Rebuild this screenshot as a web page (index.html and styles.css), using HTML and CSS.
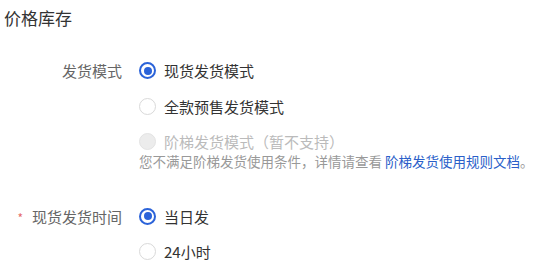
FILE: index.html
```html
<!DOCTYPE html>
<html lang="zh-CN">
<head>
    <meta charset="UTF-8">
    <title>价格库存</title>
    <link rel="stylesheet" href="styles.css">
</head>
<body>
    <div class="panel">
        <h3 class="title">价格库存</h3>

        <!-- 发货模式 -->
        <div class="form-item">
            <div class="label">发货模式</div>
            <div class="control">
                <label class="radio checked"><span class="dot"></span>现货发货模式</label>
                <label class="radio"><span class="dot"></span>全款预售发货模式</label>
                <label class="radio disabled"><span class="dot"></span>阶梯发货模式（暂不支持）</label>
                <p class="help">您不满足阶梯发货使用条件，详情请查看 <a href="#">阶梯发货使用规则文档</a>。</p>
            </div>
        </div>

        <!-- 现货发货时间 -->
        <div class="form-item">
            <div class="label"><span class="required">*</span>现货发货时间</div>
            <div class="control">
                <label class="radio checked"><span class="dot"></span>当日发</label>
                <label class="radio"><span class="dot"></span>24小时</label>
            </div>
        </div>
    </div>
</body>
</html>
```

FILE: styles.css
```css
body {
    margin: 0;
    background: #fff;
    font-family: "Noto Sans CJK SC", "Noto Sans", sans-serif;
    color: #333;
}

.panel {
    padding: 6px 0 0 4px;
}

.title {
    margin: 0;
    font-size: 17px;
    font-weight: normal;
    line-height: 24px;
    color: #333;
}

.form-item {
    display: flex;
    margin-top: 23px;
}

.form-item + .form-item {
    margin-top: 29px;
}

.label {
    width: 118px;
    text-align: right;
    font-size: 15px;
    line-height: 20px;
    padding-top: 8px;
    color: #666;
}

.required {
    color: #e56b6b;
    font-size: 12px;
    margin-right: 9px;
}

.control {
    padding-left: 17px;
    display: flex;
    flex-direction: column;
}

.radio {
    display: flex;
    align-items: center;
    height: 35.5px;
    font-size: 15px;
    color: #333;
}

.dot {
    width: 17px;
    height: 17px;
    border: 1px solid #d9d9d9;
    border-radius: 50%;
    margin-right: 8px;
    box-sizing: border-box;
    position: relative;
    background: #fff;
}

.checked .dot {
    border: 2px solid #2b63d9;
}

.checked .dot::after {
    content: "";
    position: absolute;
    left: 2.5px;
    top: 2.5px;
    width: 8px;
    height: 8px;
    border-radius: 50%;
    background: #2b63d9;
}

.disabled {
    color: #bbb;
}

.disabled .dot {
    background: #ececec;
    border-color: #e3e3e3;
}

.help {
    margin: -8px 0 0 0;
    font-size: 13.5px;
    line-height: 18px;
    color: #999;
}

.help a {
    color: #2b5fc9;
    text-decoration: none;
}
```
